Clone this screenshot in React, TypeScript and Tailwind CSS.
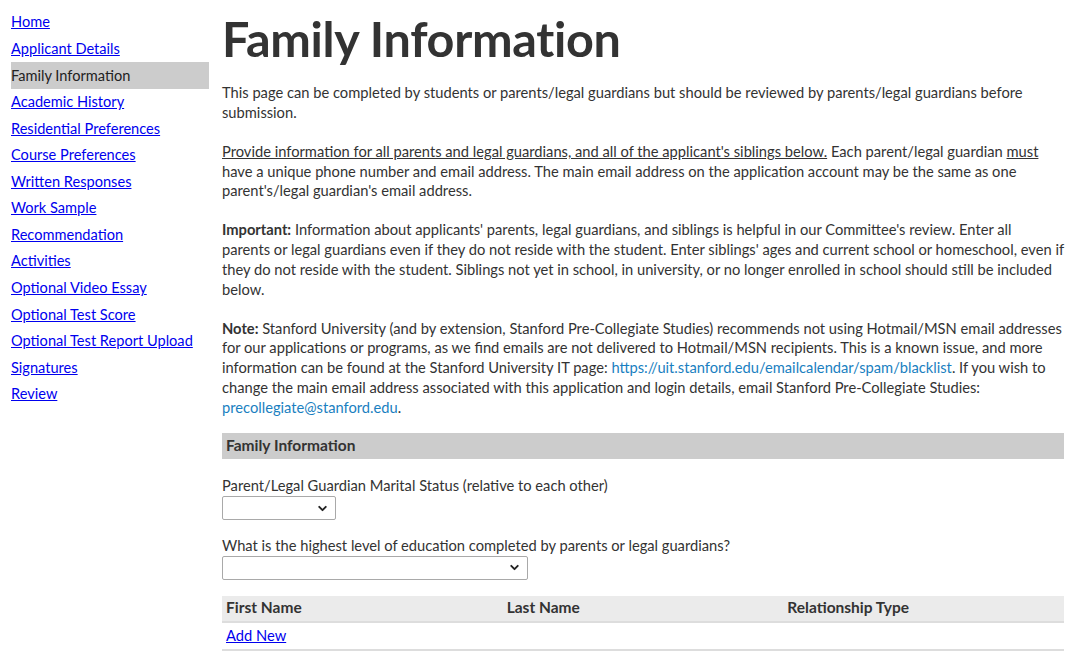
import { ChevronDown } from 'lucide-react';

const navItems = [
  'Home',
  'Applicant Details',
  'Family Information',
  'Academic History',
  'Residential Preferences',
  'Course Preferences',
  'Written Responses',
  'Work Sample',
  'Recommendation',
  'Activities',
  'Optional Video Essay',
  'Optional Test Score',
  'Optional Test Report Upload',
  'Signatures',
  'Review',
];

function Select({ width }: { width: string }) {
  return (
    <div
      className={`${width} h-[24px] border border-[#a9a9a9] rounded-[2px] bg-white flex items-center justify-end pr-[6px]`}
    >
      <ChevronDown size={13} strokeWidth={3.5} className="text-[#222]" />
    </div>
  );
}

export default function App() {
  return (
    <div
      className="min-h-[660px] bg-white text-[#333] text-[14.7px] leading-[19.75px] flex"
      style={{ fontFamily: 'Lato, "Open Sans", sans-serif' }}
    >
      {/* Sidebar */}
      <nav className="w-[209px] shrink-0 pl-[11px] pt-[9px] text-[14.6px]">
        {navItems.map((item) => (
          <div
            key={item}
            className={
              item === 'Family Information'
                ? 'h-[26.57px] flex items-center bg-[#cccccc] text-[#222]'
                : 'h-[26.57px] flex items-center'
            }
          >
            {item === 'Family Information' ? (
              <span>{item}</span>
            ) : (
              <a href="#" className="text-[#0000ee] underline">
                {item}
              </a>
            )}
          </div>
        ))}
      </nav>

      {/* Main */}
      <main className="ml-[13px] w-[842px] pt-[10px]">
        <h1 className="text-[48.5px] leading-[56px] font-bold text-[#333] tracking-[-0.3px]">
          Family Information
        </h1>

        <div className="whitespace-nowrap">
          <p className="mt-[17px]">
            This page can be completed by students or parents/legal guardians but should be reviewed by parents/legal guardians before
            <br />
            submission.
          </p>

          <p className="mt-[19.25px]">
            <span className="underline">
              Provide information for all parents and legal guardians, and all of the applicant's siblings below.
            </span>{' '}
            Each parent/legal guardian <span className="underline">must</span>
            <br />
            have a unique phone number and email address. The main email address on the application account may be the same as one
            <br />
            parent's/legal guardian's email address.
          </p>

          <p className="mt-[19.25px]">
            <b>Important:</b> Information about applicants' parents, legal guardians, and siblings is helpful in our Committee's review. Enter all
            <br />
            parents or legal guardians even if they do not reside with the student. Enter siblings' ages and current school or homeschool, even if
            <br />
            they do not reside with the student. Siblings not yet in school, in university, or no longer enrolled in school should still be included
            <br />
            below.
          </p>

          <p className="mt-[19.25px]">
            <b>Note:</b> Stanford University (and by extension, Stanford Pre-Collegiate Studies) recommends not using Hotmail/MSN email addresses
            <br />
            for our applications or programs, as we find emails are not delivered to Hotmail/MSN recipients. This is a known issue, and more
            <br />
            information can be found at the Stanford University IT page:{' '}
            <a href="#" className="text-[#1a7fc1]">
              https://uit.stanford.edu/emailcalendar/spam/blacklist
            </a>
            . If you wish to
            <br />
            change the main email address associated with this application and login details, email Stanford Pre-Collegiate Studies:
            <br />
            <a href="#" className="text-[#1a7fc1]">
              precollegiate@stanford.edu
            </a>
            .
          </p>
        </div>

        <div className="mt-[16px] h-[26px] bg-[#cccccc] flex items-center px-[4px] font-bold text-[15.5px]">
          Family Information
        </div>

        <div className="mt-[17px]">
          <div>Parent/Legal Guardian Marital Status (relative to each other)</div>
          <Select width="w-[114px]" />
        </div>

        <div className="mt-[16px]">
          <div>What is the highest level of education completed by parents or legal guardians?</div>
          <Select width="w-[306px]" />
        </div>

        <div className="mt-[16px]">
          <div className="grid grid-cols-3 h-[27px] bg-[#ebebeb] border-b-2 border-[#dddddd] font-bold text-[15.5px] items-center">
            <div className="px-[4px]">First Name</div>
            <div className="px-[4px]">Last Name</div>
            <div className="px-[4px]">Relationship Type</div>
          </div>
          <div className="h-[28px] flex items-center px-[4px] border-b-2 border-[#dddddd]">
            <a href="#" className="text-[#0000ee] underline">
              Add New
            </a>
          </div>
        </div>
      </main>
    </div>
  );
}
